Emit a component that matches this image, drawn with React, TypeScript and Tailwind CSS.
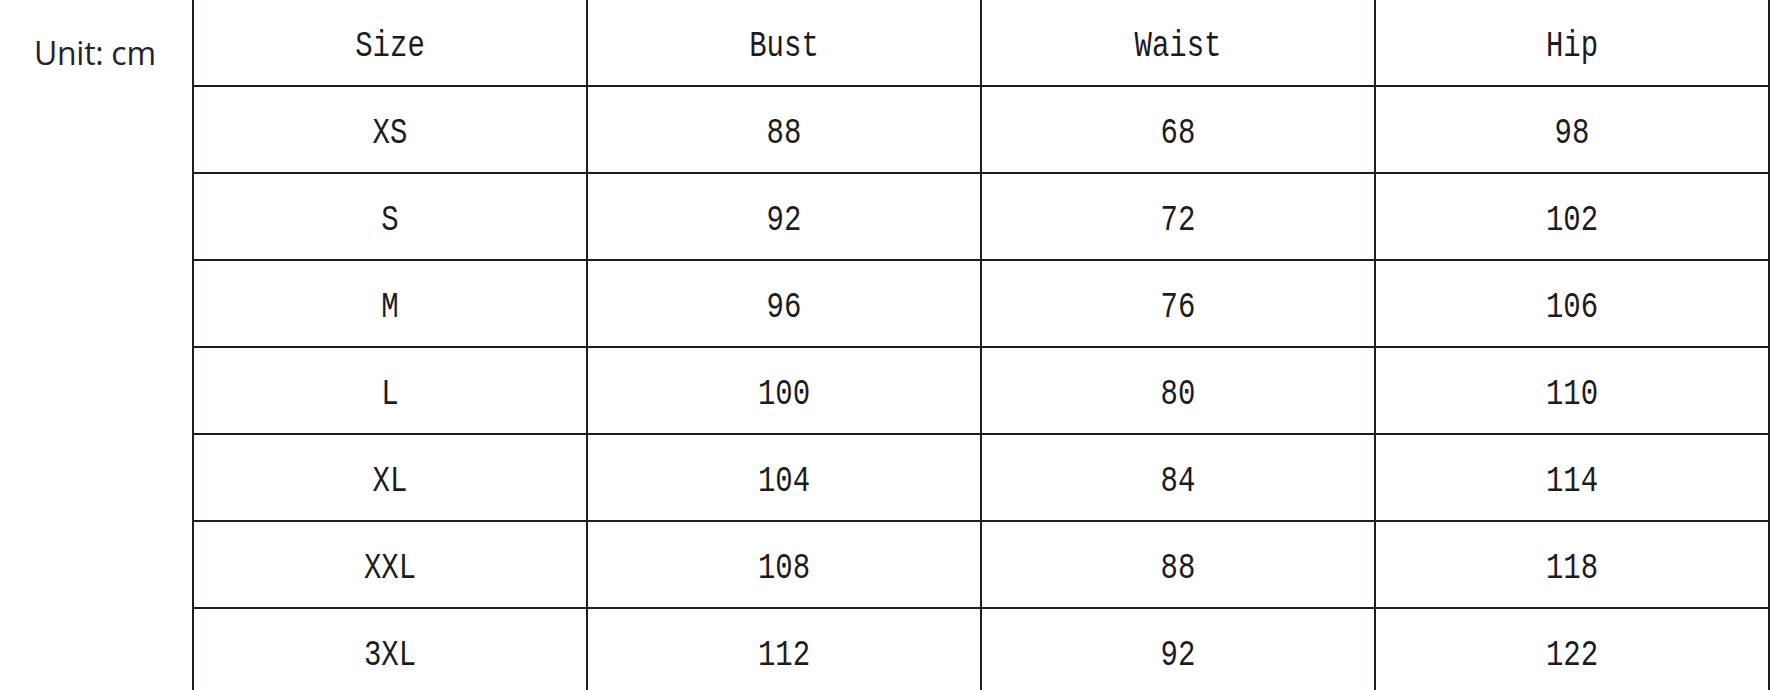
const HEADERS = ['Size', 'Bust', 'Waist', 'Hip'];

// size, bust, waist, hip — all in cm
const ROWS: [string, number, number, number][] = [
  ['XS', 88, 68, 98],
  ['S', 92, 72, 102],
  ['M', 96, 76, 106],
  ['L', 100, 80, 110],
  ['XL', 104, 84, 114],
  ['XXL', 108, 88, 118],
  ['3XL', 112, 92, 122],
];

function Cell({ children }: { children: React.ReactNode }) {
  return (
    <div className="h-[87px] flex items-center justify-center pt-[8px] border-r-2 border-b-2 border-[#1f1e1a]">
      <span
        className="inline-block scale-y-[1.3] text-[29px] leading-none text-[#1c1b1f]"
        style={{ fontFamily: '"Liberation Mono", monospace' }}
      >
        {children}
      </span>
    </div>
  );
}

export default function App() {
  return (
    <div className="w-[1770px] h-[690px] overflow-hidden bg-white flex">
      <div className="w-[192px] shrink-0 pt-[37px] pl-[34px]">
        <span
          className="text-[32px] leading-none text-[#23232a] whitespace-nowrap tracking-[-0.3px]"
          style={{ fontFamily: '"Open Sans", sans-serif' }}
        >
          Unit: cm
        </span>
      </div>

      <div className="w-[1578px] shrink-0 -mt-[2px] grid grid-cols-4 self-start border-l-2 border-t-2 border-[#1f1e1a]">
        {HEADERS.map((h) => (
          <Cell key={h}>{h}</Cell>
        ))}
        {ROWS.map(([size, bust, waist, hip]) => (
          <div key={size} className="contents">
            <Cell>{size}</Cell>
            <Cell>{bust}</Cell>
            <Cell>{waist}</Cell>
            <Cell>{hip}</Cell>
          </div>
        ))}
      </div>
    </div>
  );
}
